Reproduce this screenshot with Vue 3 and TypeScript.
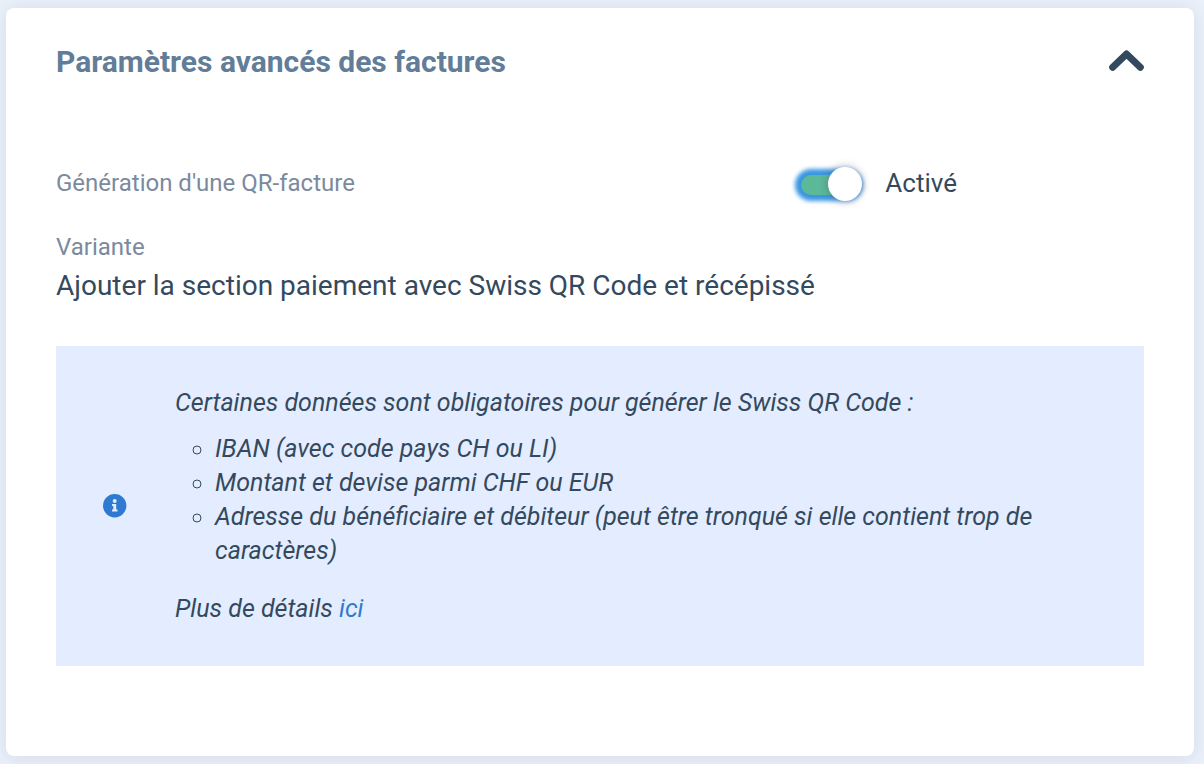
<script setup lang="ts">
import { ref } from 'vue'

const open = ref(true)
const qrEnabled = ref(true)
const requirements: string[] = [
  'IBAN (avec code pays CH ou LI)',
  'Montant et devise parmi CHF ou EUR',
  'Adresse du bénéficiaire et débiteur (peut être tronqué si elle contient trop de caractères)',
]
</script>

<template>
  <main class="page">
    <section class="card">
      <header class="card-header">
        <h2 class="title">Paramètres avancés des factures</h2>
        <button
          class="collapse"
          type="button"
          aria-label="Replier la section"
          :aria-expanded="open"
          @click="open = !open"
        >
          <svg viewBox="0 0 36 26" width="36" height="26" aria-hidden="true">
            <path
              d="M4.7 18.3 L18.5 5 L32.3 18.3"
              fill="none"
              stroke="currentColor"
              stroke-width="7"
              stroke-linecap="round"
              stroke-linejoin="round"
            />
          </svg>
        </button>
      </header>

      <div v-if="open" class="content">
        <div class="setting">
          <label class="label" for="qr-toggle">Génération d'une QR-facture</label>
          <div class="toggle">
            <input id="qr-toggle" v-model="qrEnabled" class="switch" type="checkbox" role="switch" />
            <span class="state">{{ qrEnabled ? 'Activé' : 'Désactivé' }}</span>
          </div>
        </div>

        <dl class="variant">
          <dt class="label">Variante</dt>
          <dd class="value">Ajouter la section paiement avec Swiss QR Code et récépissé</dd>
        </dl>

        <aside class="notice">
          <svg class="info" viewBox="0 0 24 24" width="24" height="24" aria-hidden="true">
            <circle cx="11.7" cy="11.7" r="11.7" fill="#2e7ad1" />
            <circle cx="11.7" cy="7" r="2" fill="#e3edff" />
            <path d="M9 10h4.2v5.5h1.3v2.1H9v-2.1h1.3v-3.4H9z" fill="#e3edff" />
          </svg>
          <div class="notice-text">
            <p class="intro">Certaines données sont obligatoires pour générer le Swiss QR Code :</p>
            <ul class="list">
              <li v-for="item in requirements" :key="item">{{ item }}</li>
            </ul>
            <p class="more">Plus de détails <a class="link" href="#">ici</a></p>
          </div>
        </aside>
      </div>
    </section>
  </main>
</template>

<style>
body {
  background: #ebf1fa;
}
</style>

<style scoped>
.page {
  box-sizing: border-box;
  padding: 8px 10px 8px 6px;
  font-family: Roboto, "Liberation Sans", sans-serif;
  color: #34495e;
}

.card {
  padding: 32px 50px 90px;
  border-radius: 8px;
  background: #fff;
  box-shadow: 0 2px 20px rgba(60, 60, 100, 0.12);
}

.card-header {
  display: flex;
  align-items: center;
  justify-content: space-between;
}

.title {
  margin: 0;
  font-size: 30px;
  line-height: 44px;
  font-weight: 700;
  color: #627d98;
}

.collapse {
  display: flex;
  padding: 0;
  border: 0;
  background: none;
  color: #34495e;
  cursor: pointer;
}

.setting {
  display: grid;
  grid-template-columns: 2fr 1fr;
  align-items: center;
  margin-top: 81px;
}

.label {
  font-size: 24px;
  line-height: 36px;
  color: #7b8a9e;
}

.toggle {
  display: flex;
  align-items: center;
  gap: 28px;
  padding-left: 20px;
}

.switch {
  appearance: none;
  position: relative;
  width: 56px;
  height: 20px;
  margin: 4px 0 0;
  border-radius: 10px;
  background: #b8c2cc;
  cursor: pointer;
}

.switch:checked {
  background: #5bb899;
  box-shadow: 0 0 4px 6px #3b96e2;
}

.switch::before {
  content: "";
  position: absolute;
  top: -8px;
  left: 0;
  width: 34px;
  height: 34px;
  border-radius: 50%;
  background: #fff;
  box-shadow: 0 0 8px rgba(60, 60, 100, 0.4);
}

.switch:checked::before {
  left: 27px;
}

.state {
  font-size: 26px;
  line-height: 36px;
}

.variant {
  margin: 28px 0 0;
}

.value {
  margin: 0;
  font-size: 28px;
  line-height: 42px;
}

.notice {
  display: flex;
  align-items: center;
  gap: 48px;
  margin-top: 39px;
  padding: 40px 48px 40px 47px;
  background: #e3edff;
  font-size: 25px;
  line-height: 34px;
  font-style: italic;
}

.info {
  flex: none;
}

.notice-text {
  flex: 1;
}

.intro,
.more {
  margin: 0;
}

.list {
  margin: 12px 0 24px;
  padding-left: 40px;
  list-style: circle;
}

.link {
  color: #2e7ad1;
  text-decoration: none;
}
</style>
